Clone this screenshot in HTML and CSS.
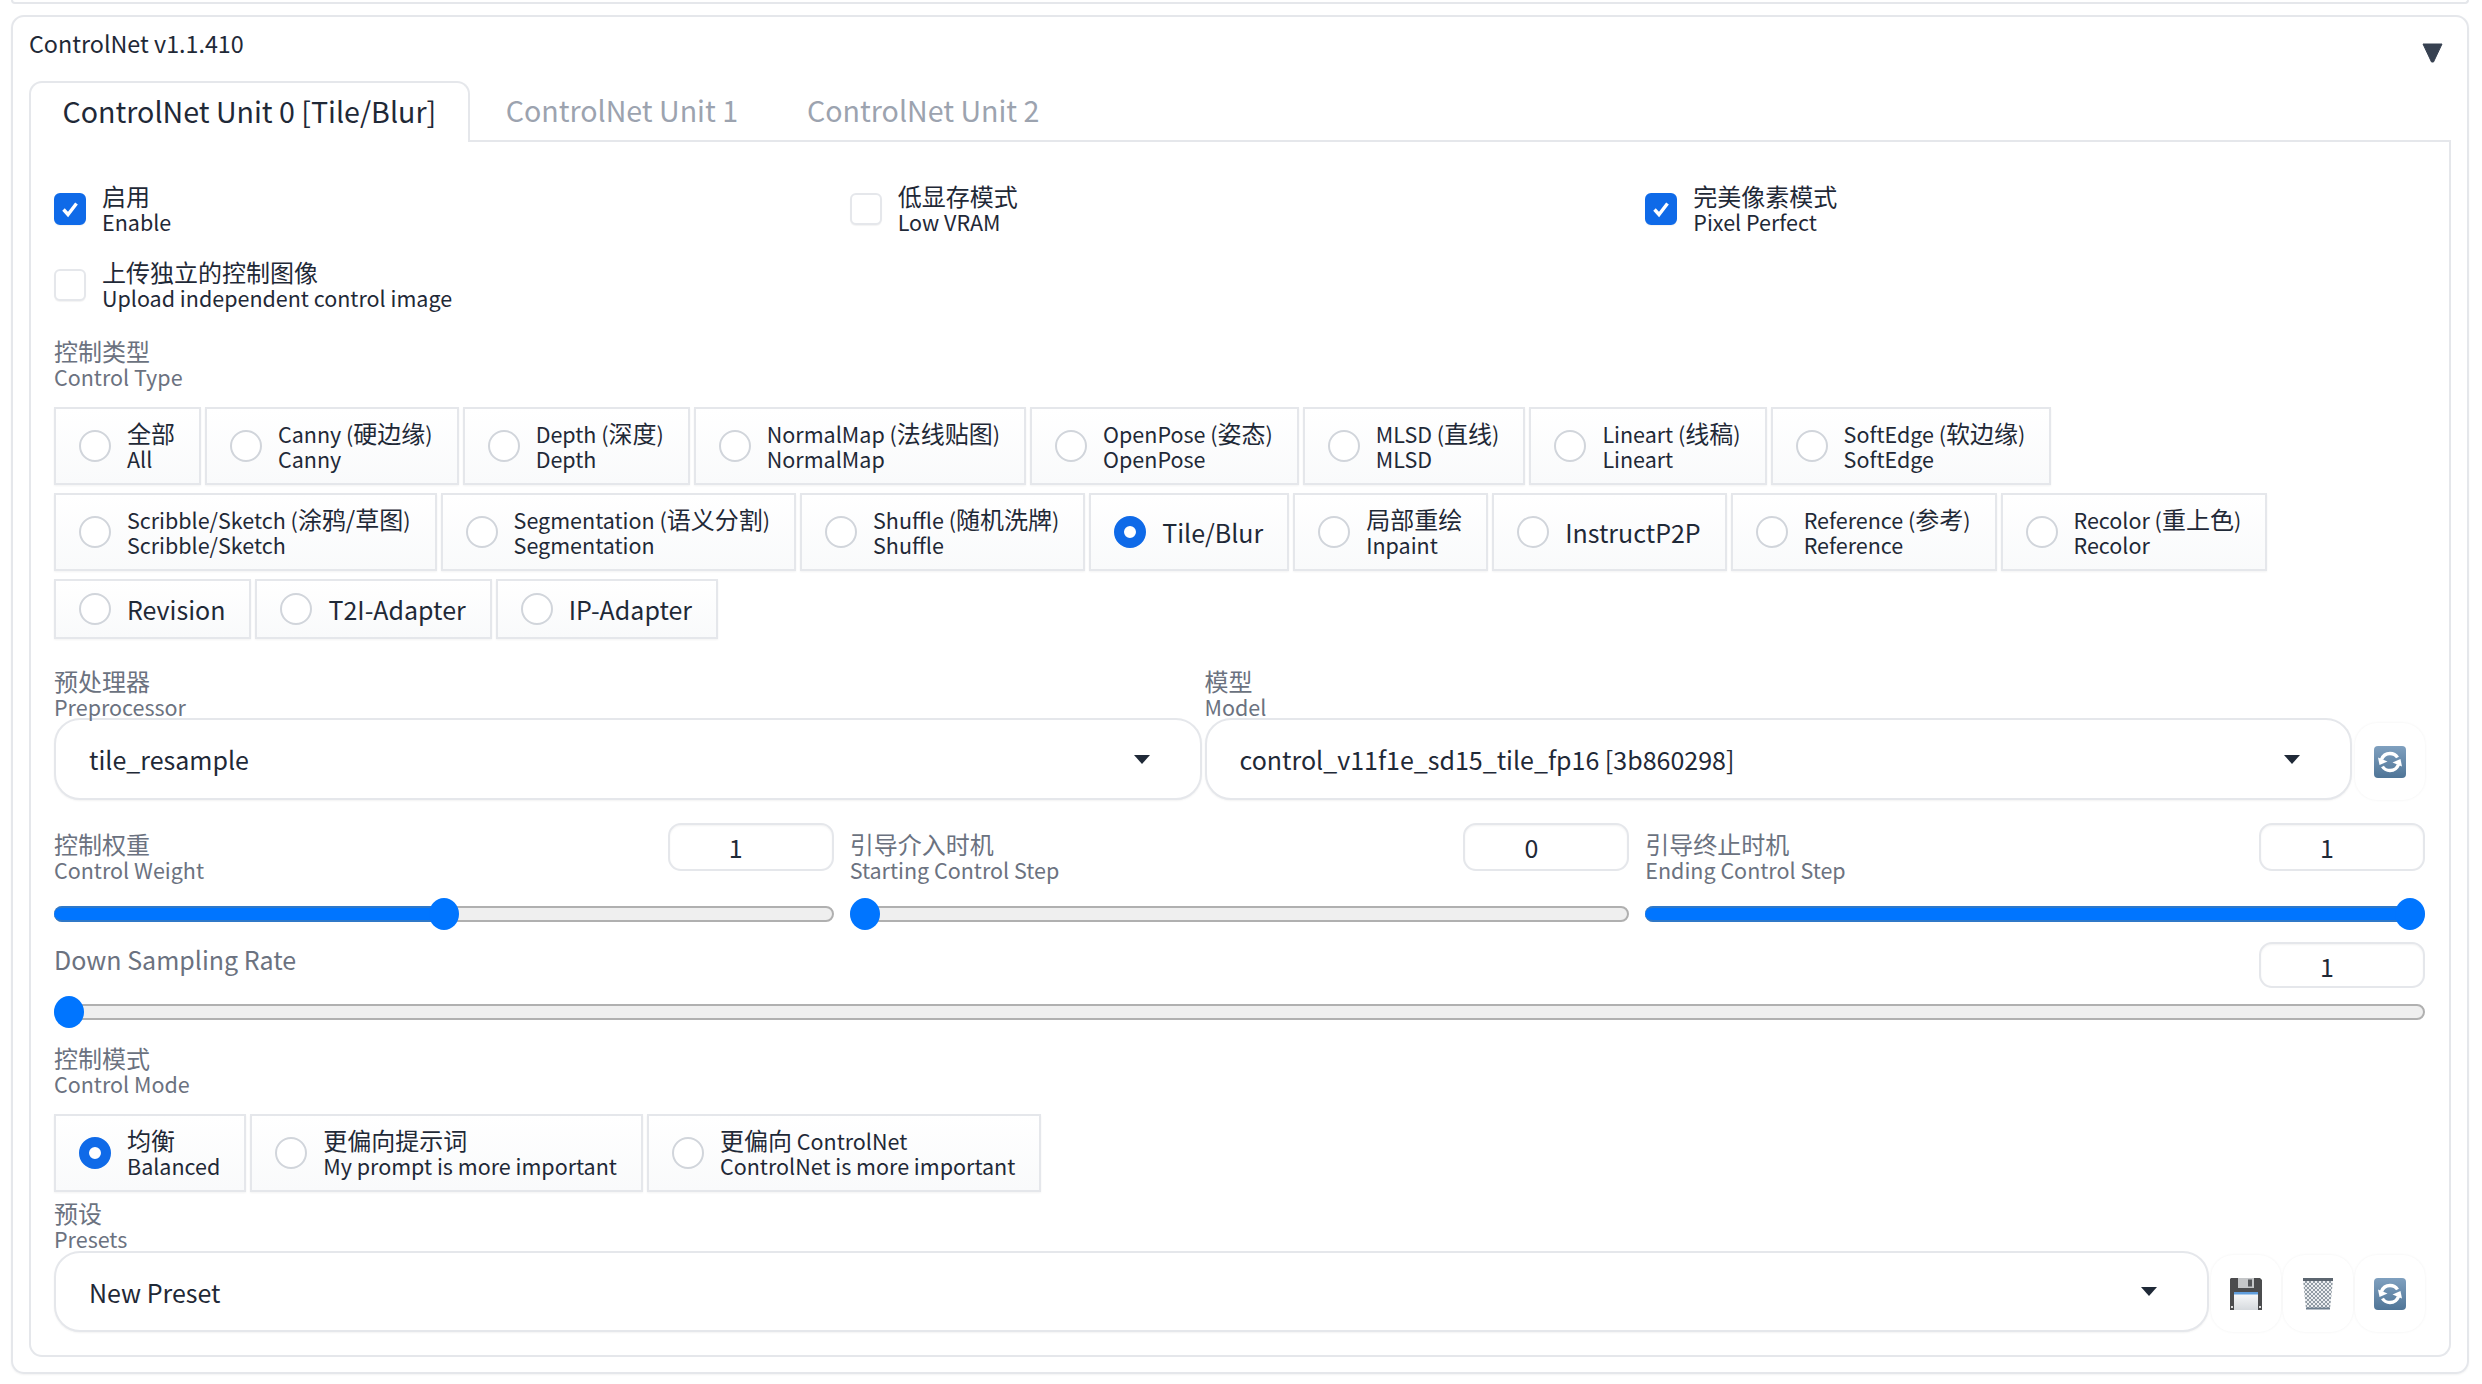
FILE: index.html
```html
<!DOCTYPE html>
<html lang="en">
<head>
    <meta charset="UTF-8">
    <title>ControlNet</title>
    <link rel="stylesheet" href="styles.css">
</head>
<body>
<svg class="defs" width="0" height="0">
    <defs>
        <linearGradient id="refreshBg" x1="0" y1="0" x2="0" y2="1">
            <stop offset="0" stop-color="#7fa0bf"/>
            <stop offset="1" stop-color="#4f7597"/>
        </linearGradient>
        <linearGradient id="diskPaper" x1="0" y1="0" x2="0" y2="1">
            <stop offset="0" stop-color="#fbfcfd"/>
            <stop offset="1" stop-color="#d6dade"/>
        </linearGradient>
        <pattern id="mesh" width="4" height="4" patternUnits="userSpaceOnUse">
            <rect width="4" height="4" fill="#eceef0"/>
            <path d="M0 0L4 4M4 0L0 4" stroke="#87929c" stroke-width="0.900"/>
        </pattern>
        <symbol id="refresh" viewBox="0 0 32 32">
            <rect width="32" height="32" rx="4" fill="url(#refreshBg)"/>
            <path d="M7.500 13.500C9 9.500 12 7.500 16 7.500c3.500 0 6 1.500 7.500 4" fill="none" stroke="#fff" stroke-width="3.400"/>
            <path d="M24.500 18.500C23 22.500 20 24.500 16 24.500c-3.500 0-6-1.500-7.500-4" fill="none" stroke="#fff" stroke-width="3.400"/>
            <path d="M4 11.500l9.500 4-8 3.500z" fill="#fff"/>
            <path d="M28 20.500l-9.500-4 8-3.500z" fill="#fff"/>
        </symbol>
    </defs>
</svg>

<div class="stub"></div>

<section class="panel">
    <div class="panel-head">
        <span>ControlNet v1.1.410</span>
        <svg class="collapse" viewBox="0 0 21 20"><path d="M1 1h19L11.500 19h-2z" fill="#374151" stroke="#374151" stroke-linejoin="round"/></svg>
    </div>

    <div class="tabs">
        <div class="tab active">ControlNet Unit 0 [Tile/Blur]</div>
        <div class="tab">ControlNet Unit 1</div>
        <div class="tab">ControlNet Unit 2</div>
    </div>

    <div class="tab-body">
        <div class="check-row">
            <div class="check"><i class="box on"><svg viewBox="0 0 32 32"><path d="M9.500 16.500l4.500 5 8.500-11" fill="none" stroke="#fff" stroke-width="3.400"/></svg></i><span class="two"><b><em>启用</em></b><b>Enable</b></span></div>
            <div class="check"><i class="box"></i><span class="two"><b><em>低显存模式</em></b><b>Low VRAM</b></span></div>
            <div class="check"><i class="box on"><svg viewBox="0 0 32 32"><path d="M9.500 16.500l4.500 5 8.500-11" fill="none" stroke="#fff" stroke-width="3.400"/></svg></i><span class="two"><b><em>完美像素模式</em></b><b>Pixel Perfect</b></span></div>
        </div>
        <div class="check-row second">
            <div class="check"><i class="box"></i><span class="two"><b><em>上传独立的控制图像</em></b><b>Upload independent control image</b></span></div>
        </div>

        <div class="field-label type-label"><b><em>控制类型</em></b><b>Control Type</b></div>
        <div class="radios">
            <div class="radio"><i class="dot"></i><span class="two"><b><em>全部</em></b><b>All</b></span></div>
            <div class="radio"><i class="dot"></i><span class="two"><b>Canny (<em>硬边缘</em>)</b><b>Canny</b></span></div>
            <div class="radio"><i class="dot"></i><span class="two"><b>Depth (<em>深度</em>)</b><b>Depth</b></span></div>
            <div class="radio"><i class="dot"></i><span class="two"><b>NormalMap (<em>法线贴图</em>)</b><b>NormalMap</b></span></div>
            <div class="radio"><i class="dot"></i><span class="two"><b>OpenPose (<em>姿态</em>)</b><b>OpenPose</b></span></div>
            <div class="radio"><i class="dot"></i><span class="two"><b>MLSD (<em>直线</em>)</b><b>MLSD</b></span></div>
            <div class="radio"><i class="dot"></i><span class="two"><b>Lineart (<em>线稿</em>)</b><b>Lineart</b></span></div>
            <div class="radio"><i class="dot"></i><span class="two"><b>SoftEdge (<em>软边缘</em>)</b><b>SoftEdge</b></span></div>
            <div class="radio"><i class="dot"></i><span class="two"><b>Scribble/Sketch (<em>涂鸦/草图</em>)</b><b>Scribble/Sketch</b></span></div>
            <div class="radio"><i class="dot"></i><span class="two"><b>Segmentation (<em>语义分割</em>)</b><b>Segmentation</b></span></div>
            <div class="radio"><i class="dot"></i><span class="two"><b>Shuffle (<em>随机洗牌</em>)</b><b>Shuffle</b></span></div>
            <div class="radio"><i class="dot on"></i><span class="one">Tile/Blur</span></div>
            <div class="radio"><i class="dot"></i><span class="two"><b><em>局部重绘</em></b><b>Inpaint</b></span></div>
            <div class="radio"><i class="dot"></i><span class="one">InstructP2P</span></div>
            <div class="radio"><i class="dot"></i><span class="two"><b>Reference (<em>参考</em>)</b><b>Reference</b></span></div>
            <div class="radio"><i class="dot"></i><span class="two"><b>Recolor (<em>重上色</em>)</b><b>Recolor</b></span></div>
            <div class="radio short"><i class="dot"></i><span class="one">Revision</span></div>
            <div class="radio short"><i class="dot"></i><span class="one">T2I-Adapter</span></div>
            <div class="radio short"><i class="dot"></i><span class="one">IP-Adapter</span></div>
        </div>

        <div class="model-row">
            <div class="model-col">
                <div class="field-label"><b><em>预处理器</em></b><b>Preprocessor</b></div>
                <div class="select"><span>tile_resample</span><i class="caret"></i></div>
            </div>
            <div class="model-col">
                <div class="field-label"><b><em>模型</em></b><b>Model</b></div>
                <div class="select"><span>control_v11f1e_sd15_tile_fp16 [3b860298]</span><i class="caret"></i></div>
            </div>
            <div class="icon-btn"><svg><use href="#refresh"/></svg></div>
        </div>

        <div class="sliders">
            <div class="slider">
                <div class="slider-head">
                    <div class="field-label"><b><em>控制权重</em></b><b>Control Weight</b></div>
                    <div class="number">1</div>
                </div>
                <div class="track"><div class="fill" style="width: 50%"></div><i class="thumb" style="left: 50%"></i></div>
            </div>
            <div class="slider">
                <div class="slider-head">
                    <div class="field-label"><b><em>引导介入时机</em></b><b>Starting Control Step</b></div>
                    <div class="number">0</div>
                </div>
                <div class="track"><i class="thumb min" style="left: 0%"></i></div>
            </div>
            <div class="slider">
                <div class="slider-head">
                    <div class="field-label"><b><em>引导终止时机</em></b><b>Ending Control Step</b></div>
                    <div class="number">1</div>
                </div>
                <div class="track"><div class="fill" style="width: 100%"></div><i class="thumb max" style="left: 100%"></i></div>
            </div>
        </div>

        <div class="rate">
            <div class="slider-head rate-head">
                <div class="rate-label">Down Sampling Rate</div>
                <div class="number">1</div>
            </div>
            <div class="track"><i class="thumb min" style="left: 0%"></i></div>
        </div>

        <div class="field-label mode-label"><b><em>控制模式</em></b><b>Control Mode</b></div>
        <div class="radios modes">
            <div class="radio"><i class="dot on"></i><span class="two"><b><em>均衡</em></b><b>Balanced</b></span></div>
            <div class="radio"><i class="dot"></i><span class="two"><b><em>更偏向提示词</em></b><b>My prompt is more important</b></span></div>
            <div class="radio"><i class="dot"></i><span class="two"><b><em>更偏向</em> ControlNet</b><b>ControlNet is more important</b></span></div>
        </div>

        <div class="field-label preset-label"><b><em>预设</em></b><b>Presets</b></div>
        <div class="preset-row">
            <div class="select"><span>New Preset</span><i class="caret"></i></div>
            <div class="icon-btn">
                <svg viewBox="0 0 32 32">
                    <path d="M1 0h29l2 2v30H0V1z" fill="#4b4c4e"/>
                    <rect x="8" y="0" width="16" height="10" fill="#c4c6c8"/>
                    <rect x="18" y="1.500" width="4" height="7" fill="#55575a"/>
                    <rect x="4" y="14" width="24" height="18" fill="url(#diskPaper)"/>
                    <rect x="4" y="14" width="24" height="2.500" fill="#5f9ddc"/>
                    <rect x="1" y="28" width="2" height="2" fill="#ddd"/>
                    <rect x="29" y="28" width="2" height="2" fill="#ddd"/>
                </svg>
            </div>
            <div class="icon-btn">
                <svg viewBox="0 0 32 32">
                    <path d="M1 2h30l-3 29H4z" fill="url(#mesh)"/>
                    <path d="M1 1.500h30" stroke="#5c6670" stroke-width="3"/>
                    <path d="M4 30.500h24" stroke="#6f7f8e" stroke-width="2"/>
                </svg>
            </div>
            <div class="icon-btn"><svg><use href="#refresh"/></svg></div>
        </div>
    </div>
</section>
</body>
</html>
```

FILE: styles.css
```css
*{
    margin: 0;
    padding: 0;
    box-sizing: border-box;
}
body{
    width: 2482px;
    height: 1384px;
    padding: 0 13px 0 11px;
    overflow: hidden;
    background: #ffffff;
    color: #1f2937;
    font-family: "Noto Sans CJK SC", "Noto Sans", sans-serif;
    font-size: 21.5px;
}
b{
    font-weight: 400;
    display: block;
}
em{
    font-style: normal;
    font-size: 24px;
}
i{
    display: block;
    font-style: normal;
    flex: none;
}
.defs{
    position: absolute;
}

.stub{
    height: 4px;
    border: 2px solid #e5e7eb;
    border-top: 0;
    border-radius: 0 0 10px 10px;
    margin-bottom: 11px;
}
.panel{
    height: 1359px;
    border: 2px solid #e5e7eb;
    border-radius: 13px;
    padding: 11px 16px 0 16px;
    box-shadow: 0 1px 2px rgba(0,0,0,0.05);
}
.panel-head{
    display: flex;
    justify-content: space-between;
    height: 30px;
    line-height: 30px;
    font-size: 23.3px;
    padding-right: 8px;
}
.collapse{
    width: 21px;
    height: 20px;
    margin-top: 15px;
}

.tabs{
    display: flex;
    margin-top: 23px;
    height: 61px;
    border-bottom: 2px solid #e5e7eb;
}
.tab{
    height: 61px;
    padding: 0 33px 0 36px;
    line-height: 58px;
    font-size: 28.6px;
    color: #9ca3af;
    white-space: nowrap;
}
.tab.active{
    color: #1f2937;
    background: #ffffff;
    border: 2px solid #e5e7eb;
    border-bottom: 0;
    border-radius: 13px 13px 0 0;
    padding: 0 31.500px;
    line-height: 56px;
}

.tab-body{
    height: 1215px;
    border: 2px solid #e5e7eb;
    border-top: 0;
    border-radius: 0 0 13px 13px;
    padding: 42px 24px 0 23px;
}

.check-row{
    display: grid;
    grid-template-columns: repeat(3, 1fr);
    column-gap: 16px;
}
.check-row.second{
    margin-top: 26px;
}
.check{
    display: flex;
    gap: 16px;
}
.two{
    line-height: 24.500px;
    white-space: nowrap;
}
.box{
    width: 32px;
    height: 32px;
    margin-top: 9px;
    border: 2px solid #e5e7eb;
    border-radius: 6px;
    background: #ffffff;
    box-shadow: 0 1px 1px rgba(0,0,0,0.05);
}
.box.on{
    background: #0f6ae8;
    border-color: #0f6ae8;
}
.box svg{
    display: block;
    width: 32px;
    height: 32px;
    margin: -2px;
}

.field-label{
    color: #6b7280;
    line-height: 25px;
    white-space: nowrap;
}
.type-label{
    margin-top: 28px;
}

.radios{
    display: flex;
    flex-wrap: wrap;
    gap: 8px 4px;
    margin-top: 18px;
}
.radio{
    display: flex;
    align-items: center;
    gap: 16px;
    height: 78px;
    padding: 0 24px 0 23px;
    border: 2px solid #e5e7eb;
    background: linear-gradient(#ffffff, #f9fafb);
    box-shadow: 0 1px 2px rgba(0,0,0,0.05);
}
.radio.short{
    height: 60px;
}
.dot{
    width: 32px;
    height: 32px;
    border: 2px solid #d1d5db;
    border-radius: 50%;
    background: #ffffff;
}
.dot.on{
    border: 10px solid #0f6ae8;
}
.one{
    font-size: 25px;
    white-space: nowrap;
}

.model-row{
    display: flex;
    gap: 3px;
    margin-top: 29px;
    align-items: flex-end;
}
.model-col{
    flex: 1;
    min-width: 0;
}
.select{
    display: flex;
    align-items: center;
    justify-content: space-between;
    height: 82px;
    margin-top: -1px;
    padding: 0 50px 0 33px;
    border: 2px solid #e5e7eb;
    border-radius: 26px;
    font-size: 25px;
    background: #ffffff;
    box-shadow: 0 1px 2px rgba(0,0,0,0.05);
}
.caret{
    width: 0;
    height: 0;
    border-left: 8px solid transparent;
    border-right: 8px solid transparent;
    border-top: 9px solid #1f2937;
}
.icon-btn{
    display: flex;
    flex: none;
    align-items: center;
    justify-content: center;
    width: 70px;
    height: 77px;
    border-radius: 22px;
    background: #ffffff;
    box-shadow: 0 0 3px rgba(0,0,0,0.06);
}
.icon-btn svg{
    width: 32px;
    height: 32px;
}

.sliders{
    display: grid;
    grid-template-columns: repeat(3, 1fr);
    column-gap: 16px;
    margin-top: 23px;
}
.slider-head{
    display: flex;
    justify-content: space-between;
    height: 48px;
}
.slider-head .field-label{
    padding-top: 8px;
}
.number{
    width: 166px;
    height: 48px;
    padding-right: 30px;
    border: 2px solid #e5e7eb;
    border-radius: 13px;
    text-align: center;
    line-height: 44px;
    font-size: 25px;
    background: #ffffff;
    box-shadow: inset 0 1px 2px rgba(0,0,0,0.05);
}
.track{
    position: relative;
    height: 16px;
    margin-top: 35px;
    border: 2px solid #b0b0b0;
    border-radius: 8px;
    background: #efefef;
}
.fill{
    position: absolute;
    top: -2px;
    left: -2px;
    height: 16px;
    border-top: 2px solid #2f78c8;
    border-bottom: 2px solid #2f78c8;
    border-radius: 8px 0 0 8px;
    background: #0075ff;
}
.thumb{
    position: absolute;
    top: -10px;
    width: 30px;
    height: 32px;
    margin-left: -15px;
    border-radius: 50%;
    background: #0075ff;
}
.thumb.min{
    margin-left: -2px;
}
.thumb.max{
    margin-left: -28px;
}

.rate{
    margin-top: 20px;
}
.rate-head{
    height: 46px;
}
.rate-head .number{
    height: 46px;
}
.rate-label{
    color: #6b7280;
    font-size: 25px;
    line-height: 34px;
}
.rate .track{
    margin-top: 16px;
}

.mode-label{
    margin-top: 25px;
}
.modes{
    margin-top: 18px;
}
.preset-label{
    margin-top: 8px;
}
.preset-row{
    display: flex;
    gap: 2px;
    align-items: flex-end;
}
.preset-row .select{
    flex: 1;
    margin-top: 0;
    height: 81px;
}
```
